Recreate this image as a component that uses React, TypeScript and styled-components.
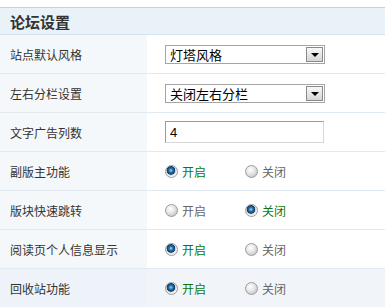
import React from "react";
import styled, { createGlobalStyle } from "styled-components";

const GlobalStyle = createGlobalStyle`
  html, body {
    margin: 0;
    padding: 0;
    background: #fff;
  }
  body {
    font-family: "Noto Sans CJK SC", "Noto Sans", sans-serif;
    font-size: 12px;
    color: #333;
  }
`;

const Page = styled.div`
  width: 385px;
  padding-top: 7px;
`;

const Panel = styled.div`
  border-top: 1px solid #c3d3e0;
`;

const Header = styled.div`
  height: 26px;
  display: flex;
  align-items: center;
  padding-left: 10px;
  background: #e9f1f9;
  border-bottom: 1px solid #d6e2ee;
  font-size: 15px;
  font-weight: bold;
  color: #333;
`;

const Row = styled.div<{ $active?: boolean }>`
  display: flex;
  height: 38px;
  border-bottom: 1px solid #e1e9f1;
  background: ${(p) => (p.$active ? "#f1f5fa" : "#fff")};
`;

const Label = styled.div<{ $active?: boolean }>`
  width: 137px;
  padding-left: 10px;
  display: flex;
  align-items: center;
  background: ${(p) => (p.$active ? "#eef3f9" : "#f5f8fb")};
  color: #333;
`;

const Value = styled.div`
  flex: 1;
  display: flex;
  align-items: center;
  padding-left: 18px;
`;

const SelectBox = styled.div`
  width: 158px;
  height: 17px;
  display: flex;
  align-items: center;
  border: 1px solid #a5a5a5;
  background: #fff;
`;

const SelectText = styled.span`
  flex: 1;
  padding-left: 4px;
  font-size: 13px;
  color: #000;
  line-height: 17px;
`;

const ArrowButton = styled.span`
  width: 17px;
  height: 15px;
  margin-right: 1px;
  box-sizing: border-box;
  border: 1px solid #8a8a8a;
  background: linear-gradient(#f8f8f8, #d6d6d6);
  display: flex;
  align-items: center;
  justify-content: center;

  &::after {
    content: "";
    border-left: 4px solid transparent;
    border-right: 4px solid transparent;
    border-top: 4px solid #000;
    margin-top: 1px;
  }
`;

const TextInput = styled.input`
  width: 159px;
  height: 22px;
  box-sizing: border-box;
  padding: 0 0 0 4px;
  border: 1px solid #d6d6d6;
  border-top-color: #9a9a9a;
  border-left-color: #9a9a9a;
  font-family: "Liberation Sans", Arial, sans-serif;
  font-size: 13px;
  color: #000;
  outline: none;
`;

const RadioGroup = styled.div`
  display: flex;
  align-items: center;
`;

const RadioItem = styled.label<{ $checked: boolean }>`
  display: flex;
  align-items: center;
  width: 80px;
  color: ${(p) => (p.$checked ? "#0b7a0b" : "#666")};
`;

const RadioDot = styled.span<{ $checked: boolean }>`
  width: 11px;
  height: 11px;
  margin-right: 4px;
  border-radius: 50%;
  border: 1px solid #9c9c9c;
  background: ${(p) =>
    p.$checked
      ? "radial-gradient(circle at 45% 40%, #a6d6f2 0, #2a72aa 2px, #0d3c68 4px, #d8d8d8 4.6px, #f4f4f4 6px)"
      : "radial-gradient(circle at 40% 35%, #ffffff 0, #e8e8e8 4px, #cdcdcd 7px)"};
`;

type RadioProps = { on: boolean };

const OnOff = ({ on }: RadioProps) => (
  <RadioGroup>
    <RadioItem $checked={on}>
      <RadioDot $checked={on} />
      开启
    </RadioItem>
    <RadioItem $checked={!on}>
      <RadioDot $checked={!on} />
      关闭
    </RadioItem>
  </RadioGroup>
);

const toggles = [
  { label: "副版主功能", on: true },
  { label: "版块快速跳转", on: false },
  { label: "阅读页个人信息显示", on: true },
  { label: "回收站功能", on: true, active: true },
];

const App = () => {
  return (
    <>
      <GlobalStyle />
      <Page>
        <Panel>
          <Header>论坛设置</Header>
          <Row>
            <Label>站点默认风格</Label>
            <Value>
              <SelectBox>
                <SelectText>灯塔风格</SelectText>
                <ArrowButton />
              </SelectBox>
            </Value>
          </Row>
          <Row>
            <Label>左右分栏设置</Label>
            <Value>
              <SelectBox>
                <SelectText>关闭左右分栏</SelectText>
                <ArrowButton />
              </SelectBox>
            </Value>
          </Row>
          <Row>
            <Label>文字广告列数</Label>
            <Value>
              <TextInput defaultValue="4" />
            </Value>
          </Row>
          {toggles.map((t) => (
            <Row key={t.label} $active={t.active}>
              <Label $active={t.active}>{t.label}</Label>
              <Value>
                <OnOff on={t.on} />
              </Value>
            </Row>
          ))}
        </Panel>
      </Page>
    </>
  );
};

export default App;
